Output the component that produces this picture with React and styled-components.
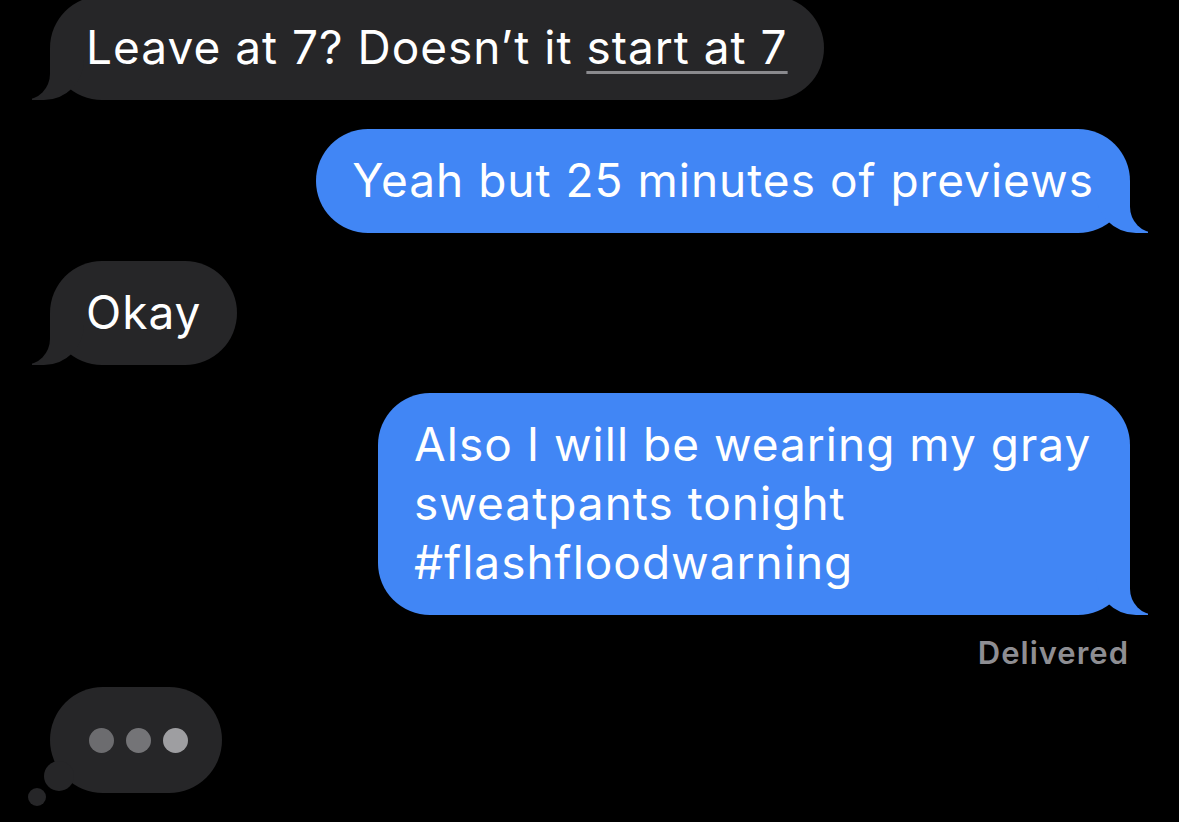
import React from "react";
import styled, { createGlobalStyle, css } from "styled-components";

const GlobalStyle = createGlobalStyle`
  html, body {
    margin: 0;
    padding: 0;
    background: #000;
  }
  body {
    font-family: Inter, "Noto Sans", "Liberation Sans", sans-serif;
    -webkit-font-smoothing: antialiased;
  }
`;

const INCOMING = "#262628";
const OUTGOING = "#4186f5";

const Screen = styled.div`
  width: 1179px;
  height: 822px;
  overflow: hidden;
  background: #000;
`;

const Thread = styled.div`
  display: flex;
  flex-direction: column;
  padding: 0 49px 0 50px;
  margin-top: -4px;
`;

const Row = styled.div`
  display: flex;
  justify-content: ${(p) => (p.$out ? "flex-end" : "flex-start")};
  margin-top: ${(p) => p.$space || 0}px;
`;

const tailRight = css`
  &::before {
    content: "";
    position: absolute;
    z-index: -1;
    bottom: 0;
    right: -18px;
    width: 52px;
    height: 52px;
    background: ${OUTGOING};
    border-bottom-left-radius: 40px;
  }
  &::after {
    content: "";
    position: absolute;
    z-index: -1;
    bottom: 0;
    right: -26px;
    width: 26px;
    height: 54px;
    background: #000;
    border-bottom-left-radius: 26px;
  }
`;

const tailLeft = css`
  &::before {
    content: "";
    position: absolute;
    z-index: -1;
    bottom: 0;
    left: -18px;
    width: 52px;
    height: 52px;
    background: ${INCOMING};
    border-bottom-right-radius: 40px;
  }
  &::after {
    content: "";
    position: absolute;
    z-index: -1;
    bottom: 0;
    left: -26px;
    width: 26px;
    height: 54px;
    background: #000;
    border-bottom-right-radius: 26px;
  }
`;

const Bubble = styled.div`
  position: relative;
  isolation: isolate;
  box-sizing: border-box;
  max-width: ${(p) => (p.$single ? "none" : "752px")};
  white-space: ${(p) => (p.$single ? "nowrap" : "normal")};
  padding: 22px 36px 23px;
  border-radius: 52px;
  background: ${(p) => (p.$out ? OUTGOING : INCOMING)};
  color: #fff;
  font-size: 46px;
  line-height: 59px;
  font-weight: 400;
  letter-spacing: 1px;
  ${(p) => (p.$out ? tailRight : tailLeft)}
`;

const Link = styled.span`
  text-decoration: underline;
  text-decoration-color: #8a8a8e;
  text-decoration-thickness: 3px;
  text-underline-offset: 7px;
`;

const Status = styled.div`
  align-self: flex-end;
  margin-top: 20px;
  margin-right: 1px;
  color: #8e8e93;
  font-size: 31px;
  line-height: 36px;
  font-weight: 600;
  letter-spacing: 1px;
`;

const Typing = styled.div`
  position: relative;
  width: 172px;
  height: 106px;
  box-sizing: border-box;
  padding: 0 33px 0 39px;
  border-radius: 53px;
  background: ${INCOMING};
  display: flex;
  align-items: center;
  gap: 12px;
`;

const Dot = styled.span`
  width: 25px;
  height: 25px;
  border-radius: 50%;
  background: ${(p) => p.$tone};
`;

const Puff = styled.span`
  position: absolute;
  left: ${(p) => p.$x}px;
  top: ${(p) => p.$y}px;
  width: ${(p) => p.$size}px;
  height: ${(p) => p.$size}px;
  border-radius: 50%;
  background: ${INCOMING};
`;

export default function App() {
  return (
    <Screen>
      <GlobalStyle />
      <Thread>
        <Row>
          <Bubble $single>
            Leave at 7? Doesn’t it <Link>start at 7</Link>
          </Bubble>
        </Row>
        <Row $out $space={29}>
          <Bubble $out $single>Yeah but 25 minutes of previews</Bubble>
        </Row>
        <Row $space={28}>
          <Bubble $single>Okay</Bubble>
        </Row>
        <Row $out $space={28}>
          <Bubble $out>
            Also I will be wearing my gray sweatpants tonight #flashfloodwarning
          </Bubble>
        </Row>
        <Status>Delivered</Status>
        <Row $space={16}>
          <Typing>
            <Dot $tone="#6c6c6f" />
            <Dot $tone="#747477" />
            <Dot $tone="#9e9ea1" />
            <Puff $x={-6} $y={74} $size={30} />
            <Puff $x={-22} $y={101} $size={18} />
          </Typing>
        </Row>
      </Thread>
    </Screen>
  );
}
